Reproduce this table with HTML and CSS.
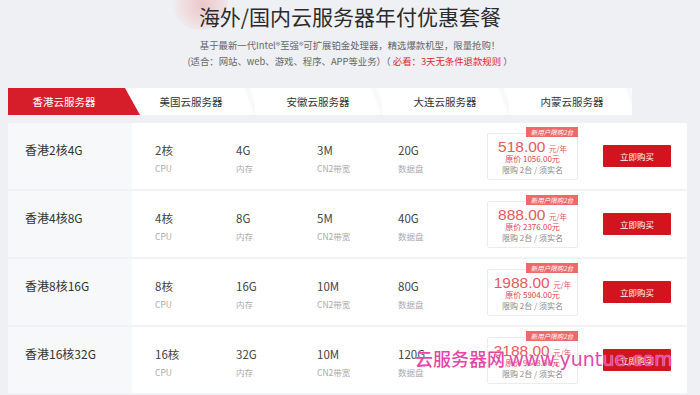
FILE: index.html
```html
<!DOCTYPE html>
<html lang="zh-CN">
<head>
<meta charset="utf-8">
<title>海外/国内云服务器年付优惠套餐</title>
<link rel="stylesheet" href="styles.css">
</head>
<body>
<div class="page">
  <header class="head">
    <div class="blob"></div>
    <h1 class="title">海外/国内云服务器年付优惠套餐</h1>
    <p class="sub">基于最新一代Intel®至强®可扩展铂金处理器，精选爆款机型，限量抢购！</p>
    <p class="sub">(适合：网站、web、游戏、程序、APP等业务）（ <span class="red">必看：3天无条件退款规则</span> ）</p>
  </header>

  <nav class="tabs">
    <div class="tabs-in">
      <div class="tab active">香港云服务器</div>
      <div class="tab second">美国云服务器</div>
      <div class="tab">安徽云服务器</div>
      <div class="tab">大连云服务器</div>
      <div class="tab">内蒙云服务器</div>
    </div>
  </nav>

  <section class="card">
    <div class="row">
      <div class="name">香港2核4G</div>
      <div class="specs">
        <div class="spec"><div class="val">2核</div><div class="lbl">CPU</div></div>
        <div class="spec"><div class="val">4G</div><div class="lbl">内存</div></div>
        <div class="spec"><div class="val">3M</div><div class="lbl">CN2带宽</div></div>
        <div class="spec"><div class="val">20G</div><div class="lbl">数据盘</div></div>
      </div>
      <div class="pricebox">
        <span class="badge">新用户限购2台</span>
        <div class="price"><span class="num">518.00</span> <span class="unit">元/年</span></div>
        <div class="orig">原价 1056.00元</div>
        <div class="limit">限购 2台 / 须实名</div>
      </div>
      <button class="buy">立即购买</button>
    </div>
    <div class="row">
      <div class="name">香港4核8G</div>
      <div class="specs">
        <div class="spec"><div class="val">4核</div><div class="lbl">CPU</div></div>
        <div class="spec"><div class="val">8G</div><div class="lbl">内存</div></div>
        <div class="spec"><div class="val">5M</div><div class="lbl">CN2带宽</div></div>
        <div class="spec"><div class="val">40G</div><div class="lbl">数据盘</div></div>
      </div>
      <div class="pricebox">
        <span class="badge">新用户限购2台</span>
        <div class="price"><span class="num">888.00</span> <span class="unit">元/年</span></div>
        <div class="orig">原价 2376.00元</div>
        <div class="limit">限购 2台 / 须实名</div>
      </div>
      <button class="buy">立即购买</button>
    </div>
    <div class="row">
      <div class="name">香港8核16G</div>
      <div class="specs">
        <div class="spec"><div class="val">8核</div><div class="lbl">CPU</div></div>
        <div class="spec"><div class="val">16G</div><div class="lbl">内存</div></div>
        <div class="spec"><div class="val">10M</div><div class="lbl">CN2带宽</div></div>
        <div class="spec"><div class="val">80G</div><div class="lbl">数据盘</div></div>
      </div>
      <div class="pricebox">
        <span class="badge">新用户限购2台</span>
        <div class="price"><span class="num">1988.00</span> <span class="unit">元/年</span></div>
        <div class="orig">原价 5904.00元</div>
        <div class="limit">限购 2台 / 须实名</div>
      </div>
      <button class="buy">立即购买</button>
    </div>
    <div class="row">
      <div class="name">香港16核32G</div>
      <div class="specs">
        <div class="spec"><div class="val">16核</div><div class="lbl">CPU</div></div>
        <div class="spec"><div class="val">32G</div><div class="lbl">内存</div></div>
        <div class="spec"><div class="val">10M</div><div class="lbl">CN2带宽</div></div>
        <div class="spec"><div class="val">120G</div><div class="lbl">数据盘</div></div>
      </div>
      <div class="pricebox">
        <span class="badge">新用户限购2台</span>
        <div class="price"><span class="num">3188.00</span> <span class="unit">元/年</span></div>
        <div class="orig">原价 9648.00元</div>
        <div class="limit">限购 2台 / 须实名</div>
      </div>
      <button class="buy">立即购买</button>
    </div>
  </section>

  <div class="watermark"><span class="wm-cn">云服务器网</span> <span class="wm-en">www.yuntue.com</span></div>
</div>
</body>
</html>
```

FILE: styles.css
```css
* { box-sizing: border-box; }
html, body { margin: 0; padding: 0; }
body {
  background: #eff0f3;
  font-family: "Noto Sans CJK SC", "Noto Sans", sans-serif;
  color: #333;
  width: 700px;
  height: 395px;
  overflow: hidden;
}
.page { position: relative; width: 700px; height: 395px; overflow: hidden; }

.head { position: relative; text-align: center; padding-top: 4px; }
.blob {
  position: absolute;
  left: 172px; top: -26px;
  width: 56px; height: 56px;
  border-radius: 50%;
  background: radial-gradient(circle at 55% 55%, rgba(236,170,172,0.6) 0%, rgba(240,196,198,0.4) 45%, rgba(240,220,222,0) 72%);
}
.title {
  position: relative;
  margin: 0;
  font-size: 21px;
  line-height: 24px;
  font-weight: 400;
  color: #2b2b2b;
}
.sub {
  margin: 0;
  font-size: 9.4px;
  line-height: 16px;
  color: #666;
}
.title + .sub { margin-top: 9px; }
.red { color: #e3242f; }

.tabs {
  margin: 19px 0 0 8px;
  width: 624px;
  height: 27px;
  background: #fff;
  overflow: hidden;
}
.tabs-in { display: flex; margin-left: -7.5px; height: 27px; }
.tab {
  flex: none;
  width: 127px;
  height: 27px;
  line-height: 27px;
  text-align: center;
  font-size: 10.5px;
  color: #333;
  background: linear-gradient(70deg, transparent 0, transparent 91%, rgba(236,238,241,0.45) 94%, transparent 98%);
}
.tab.active {
  width: 139.5px;
  padding-right: 12.5px;
  color: #fff;
  background: #d61e2a;
  clip-path: polygon(0 0, calc(100% - 15px) 0, 100% 100%, 0 100%);
}
.tab.second { margin-left: -12.5px; }

.card {
  margin: 8px 0 0 8px;
  width: 679px;
  background: #fff;
}
.row {
  display: flex;
  align-items: center;
  height: 68px;
  border-bottom: 2px solid #f1f2f5;
}
.name {
  align-self: stretch;
  width: 124px;
  padding: 18px 0 0 17px;
  background: #f7f8fa;
  font-size: 12px;
  line-height: 18px;
  color: #333;
}
.specs {
  align-self: stretch;
  display: flex;
  padding: 18px 0 0 23px;
}
.spec { width: 81px; }
.val { font-size: 11.5px; line-height: 18px; color: #444; }
.lbl { font-size: 8.5px; line-height: 14px; margin-top: 2px; color: #aaa; }

.pricebox {
  position: relative;
  margin-left: 8px;
  width: 91px;
  height: 47px;
  padding: 4px 0 5px;
  border: 1px solid #ececec;
  border-radius: 2px;
  text-align: center;
  background: #fff;
}
.badge {
  position: absolute;
  right: -1px; top: -7px;
  width: 52px; height: 10px;
  background: #f0686a;
  color: #fff;
  font-size: 6.5px;
  line-height: 10px;
  font-style: italic;
  text-align: center;
}
.price { line-height: 15px; height: 15px; color: #e8585c; white-space: nowrap; }
.num { font-family: "Liberation Sans", sans-serif; font-size: 15.5px; }
.unit { font-size: 7.5px; }
.orig { font-size: 8px; line-height: 11px; color: #e3424a; }
.limit { font-size: 8px; line-height: 12px; color: #888; }

.buy {
  margin-left: 25px;
  width: 68px;
  height: 22px;
  border: 0;
  border-radius: 1px;
  background: #d2141f;
  color: #fff;
  font-family: "Noto Sans CJK SC", sans-serif;
  font-size: 8.5px;
  padding: 0;
}

.watermark {
  position: absolute;
  left: 415px; top: 348px;
  white-space: nowrap;
  color: rgba(228, 58, 162, 0.95);
  line-height: 20px;
  text-shadow: 0 0 1px #fff;
}
.wm-cn { font-size: 18px; font-family: "Noto Sans CJK SC", sans-serif; font-weight: 500; }
.wm-en { font-size: 19px; font-family: "DejaVu Sans", sans-serif; letter-spacing: 0; }
```
